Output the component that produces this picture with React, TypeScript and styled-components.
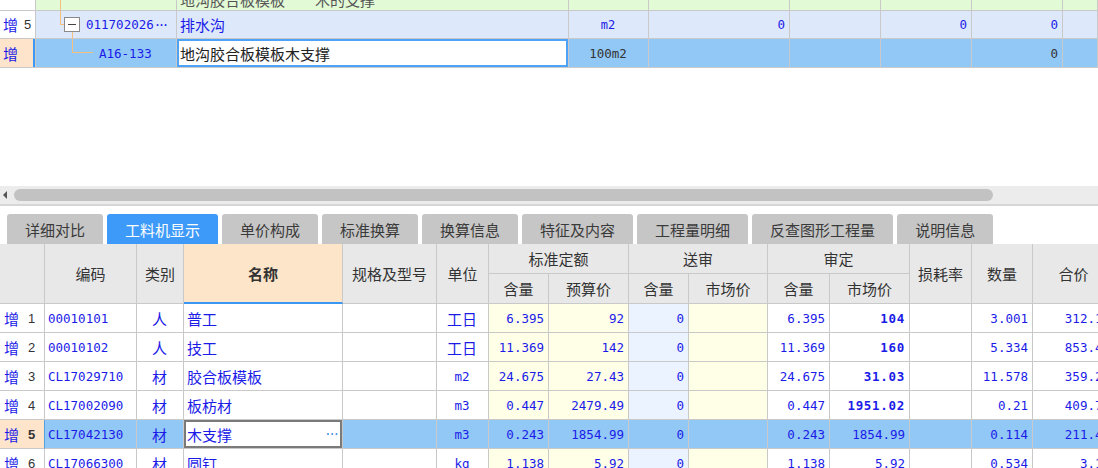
import styled, { createGlobalStyle } from 'styled-components';

const GlobalStyle = createGlobalStyle`
  html, body {
    margin: 0;
    padding: 0;
    background: #fff;
  }
  body {
    font-family: "Noto Sans CJK SC", "Noto Sans", sans-serif;
    overflow: hidden;
  }
`;

const BLUE = '#1b1be8';
const LINE = '#c9c9c9';
const YELLOW = '#ffffe8';
const PALEBLUE = '#eaf3ff';
const SEL = '#92c8f6';
const PEACH = '#fde4cb';
const MONO = '"DejaVu Sans Mono", "Liberation Mono", "Noto Sans CJK SC", monospace';

const TOP_COLS = '36px 141px 392px 80px 141px 91px 91px 91px 1fr';
const GRID_COLS =
  '45px 92px 47px 159px 94px 52px 60px 80px 60px 79px 62px 80px 62px 61px 82px';

type Align = 'left' | 'center' | 'right';

interface RowData {
  n: number;
  code: string;
  kind: string;
  name: string;
  unit: string;
  unitMono?: boolean;
  q: string;
  price: string;
  market: string;
  boldMarket?: boolean;
  qty: string;
  total: string;
  selected?: boolean;
}

const rows: RowData[] = [
  { n: 1, code: '00010101', kind: '人', name: '普工', unit: '工日', q: '6.395', price: '92', market: '104', boldMarket: true, qty: '3.001', total: '312.10' },
  { n: 2, code: '00010102', kind: '人', name: '技工', unit: '工日', q: '11.369', price: '142', market: '160', boldMarket: true, qty: '5.334', total: '853.44' },
  { n: 3, code: 'CL17029710', kind: '材', name: '胶合板模板', unit: 'm2', unitMono: true, q: '24.675', price: '27.43', market: '31.03', boldMarket: true, qty: '11.578', total: '359.27' },
  { n: 4, code: 'CL17002090', kind: '材', name: '板枋材', unit: 'm3', unitMono: true, q: '0.447', price: '2479.49', market: '1951.02', boldMarket: true, qty: '0.21', total: '409.71' },
  { n: 5, code: 'CL17042130', kind: '材', name: '木支撑', unit: 'm3', unitMono: true, q: '0.243', price: '1854.99', market: '1854.99', qty: '0.114', total: '211.47', selected: true },
  { n: 6, code: 'CL17066300', kind: '材', name: '圆钉', unit: 'kg', unitMono: true, q: '1.138', price: '5.92', market: '5.92', qty: '0.534', total: '3.16' },
];

const tabs = ['详细对比', '工料机显示', '单价构成', '标准换算', '换算信息', '特征及内容', '工程量明细', '反查图形工程量', '说明信息'];

export default function App() {
  return (
    <>
      <GlobalStyle />
      <Page>
        <TopGrid>
          <TopRow $h={11}>
            <Cell />
            <Cell $bg="#e2fad5">
              <TreeLine style={{ left: 24, top: 0, height: 11 }} />
            </Cell>
            <Cell $bg="#e2fad5" $color="#555">
              <ClippedText>地沟胶合板模板　　木的支撑</ClippedText>
            </Cell>
            <Cell $bg="#e2fad5" />
            <Cell $bg="#e2fad5" />
            <Cell $bg="#e2fad5" />
            <Cell $bg="#e2fad5" />
            <Cell $bg="#e2fad5" />
            <Cell $bg="#e2fad5" />
          </TopRow>
          <TopRow $h={28}>
            <Cell>
              <Add>增</Add>
              <Num $gap={6}>5</Num>
            </Cell>
            <Cell $bg="#dde9fb" $mono>
              <TreeLine style={{ left: 24, top: 0, height: 13 }} />
              <TreeLine style={{ left: 24, top: 13, width: 4, height: 1 }} />
              <TreeLine style={{ left: 36, top: 21, height: 7 }} />
              <Toggle>
                <Minus />
              </Toggle>
              <Indent $w={47} />
              011702026<Dots>···</Dots>
            </Cell>
            <Cell $bg="#dde9fb">排水沟</Cell>
            <Cell $bg="#dde9fb" $align="center" $mono $small>
              m2
            </Cell>
            <Cell $bg="#dde9fb" $align="right" $mono>
              0
            </Cell>
            <Cell $bg="#dde9fb" />
            <Cell $bg="#dde9fb" $align="right" $mono>
              0
            </Cell>
            <Cell $bg="#dde9fb" $align="right" $mono>
              0
            </Cell>
            <Cell $bg="#dde9fb" />
          </TopRow>
          <TopRow $h={29}>
            <FocusHead>
              <Add>增</Add>
            </FocusHead>
            <Cell $bg={SEL} $mono>
              <TreeLine style={{ left: 36, top: 0, height: 13 }} />
              <TreeLine style={{ left: 36, top: 13, width: 21, height: 1 }} />
              <Indent $w={60} />
              A16-133
            </Cell>
            <FocusCell>地沟胶合板模板木支撑</FocusCell>
            <Cell $bg={SEL} $align="center" $mono $color="#333">
              100m2
            </Cell>
            <Cell $bg={SEL} />
            <Cell $bg={SEL} />
            <Cell $bg={SEL} />
            <Cell $bg={SEL} $align="right" $mono $color="#333">
              0
            </Cell>
            <Cell $bg={SEL} />
          </TopRow>
        </TopGrid>

        <EmptyArea />

        <ScrollTrack>
          <ArrowLeft />
          <Thumb />
        </ScrollTrack>

        <TabBar>
          {tabs.map((t, i) => (
            <Tab key={t} $active={i === 1}>
              {t}
            </Tab>
          ))}
        </TabBar>

        <BottomGrid>
          <Header>
            <HeadCell $r="1 / 3" $c="1" />
            <HeadCell $r="1 / 3" $c="2">编码</HeadCell>
            <HeadCell $r="1 / 3" $c="3">类别</HeadCell>
            <HeadCell $r="1 / 3" $c="4" $active>
              名称
            </HeadCell>
            <HeadCell $r="1 / 3" $c="5">规格及型号</HeadCell>
            <HeadCell $r="1 / 3" $c="6">单位</HeadCell>
            <HeadCell $r="1" $c="7 / 9">标准定额</HeadCell>
            <HeadCell $r="1" $c="9 / 11">送审</HeadCell>
            <HeadCell $r="1" $c="11 / 13">审定</HeadCell>
            <HeadCell $r="1 / 3" $c="13">损耗率</HeadCell>
            <HeadCell $r="1 / 3" $c="14">数量</HeadCell>
            <HeadCell $r="1 / 3" $c="15">合价</HeadCell>
            <HeadCell $r="2" $c="7">含量</HeadCell>
            <HeadCell $r="2" $c="8">预算价</HeadCell>
            <HeadCell $r="2" $c="9">含量</HeadCell>
            <HeadCell $r="2" $c="10">市场价</HeadCell>
            <HeadCell $r="2" $c="11">含量</HeadCell>
            <HeadCell $r="2" $c="12">市场价</HeadCell>
          </Header>

          {rows.map((r) => {
            const sel = !!r.selected;
            const bg = (c: string) => (sel ? SEL : c);
            return (
              <DataRow key={r.n}>
                <RowHead $selected={sel}>
                  <Add>增</Add>
                  <Num $gap={9} $bold={sel}>
                    {r.n}
                  </Num>
                </RowHead>
                <Cell $bg={bg('#fff')} $mono>
                  {r.code}
                </Cell>
                <Cell $bg={bg('#fff')} $align="center">
                  {r.kind}
                </Cell>
                {sel ? (
                  <EditCell>
                    {r.name}
                    <EditDots>···</EditDots>
                  </EditCell>
                ) : (
                  <Cell>{r.name}</Cell>
                )}
                <Cell $bg={bg('#fff')} />
                <Cell $bg={bg('#fff')} $align="center" $mono={r.unitMono}>
                  {r.unit}
                </Cell>
                <Cell $bg={bg(YELLOW)} $align="right" $mono>
                  {r.q}
                </Cell>
                <Cell $bg={bg(YELLOW)} $align="right" $mono>
                  {r.price}
                </Cell>
                <Cell $bg={bg(PALEBLUE)} $align="right" $mono>
                  0
                </Cell>
                <Cell $bg={bg(YELLOW)} />
                <Cell $bg={bg('#fff')} $align="right" $mono>
                  {r.q}
                </Cell>
                <Cell $bg={bg('#fff')} $align="right" $mono $bold={r.boldMarket}>
                  {r.market}
                </Cell>
                <Cell $bg={bg('#fff')} />
                <Cell $bg={bg('#fff')} $align="right" $mono>
                  {r.qty}
                </Cell>
                <Cell $bg={bg('#fff')} $align="right" $mono>
                  {r.total}
                </Cell>
              </DataRow>
            );
          })}
        </BottomGrid>
      </Page>
    </>
  );
}

const Page = styled.div`
  width: 1098px;
  height: 468px;
  overflow: hidden;
  display: flex;
  flex-direction: column;
`;

const TopGrid = styled.div`
  display: flex;
  flex-direction: column;
  flex-shrink: 0;
`;

interface TopRowProps {
  $h: number;
}

const TopRow = styled.div<TopRowProps>`
  display: grid;
  grid-template-columns: ${TOP_COLS};
  height: ${(p) => p.$h}px;
`;

interface CellProps {
  $bg?: string;
  $align?: Align;
  $mono?: boolean;
  $bold?: boolean;
  $small?: boolean;
  $color?: string;
}

const justify = (a?: Align) =>
  a === 'right' ? 'flex-end' : a === 'center' ? 'center' : 'flex-start';

const Cell = styled.div<CellProps>`
  position: relative;
  box-sizing: border-box;
  display: flex;
  align-items: center;
  justify-content: ${(p) => justify(p.$align)};
  padding: 0 4px 0 3px;
  border-right: 1px solid ${LINE};
  border-bottom: 1px solid ${LINE};
  background: ${(p) => p.$bg ?? '#fff'};
  color: ${(p) => p.$color ?? BLUE};
  font-family: ${(p) => (p.$mono ? MONO : 'inherit')};
  font-size: ${(p) => (p.$mono ? (p.$small ? '12px' : '12.5px') : '15px')};
  font-weight: ${(p) => (p.$bold ? 700 : 400)};
  letter-spacing: ${(p) => (p.$bold && p.$mono ? '0.7px' : '0')};
  white-space: nowrap;
  overflow: hidden;
`;

const ClippedText = styled.span`
  align-self: flex-start;
  margin-top: -10px;
  line-height: 20px;
`;

const FocusHead = styled(Cell)`
  background: ${PEACH};
  box-shadow: inset -2px 0 0 #3b98f5;
`;

const FocusCell = styled(Cell)`
  background: #fff;
  color: #222;
  padding-left: 3px;
  box-shadow: inset 0 0 0 2px #4ca3f7;
`;

const TreeLine = styled.span`
  position: absolute;
  width: 1px;
  background: #f6bf7c;
`;

const Toggle = styled.span`
  position: absolute;
  left: 28px;
  top: 6px;
  width: 16px;
  height: 15px;
  box-sizing: border-box;
  border: 1px solid #8a8a8a;
  background: #fff;
  display: flex;
  align-items: center;
  justify-content: center;
`;

const Minus = styled.span`
  width: 8px;
  height: 1px;
  background: #444;
`;

interface IndentProps {
  $w: number;
}

const Indent = styled.span<IndentProps>`
  flex: 0 0 ${(p) => p.$w}px;
`;

const Dots = styled.span`
  letter-spacing: -3.5px;
`;

const Add = styled.span`
  color: ${BLUE};
  font-size: 15px;
  font-family: "Noto Sans CJK SC", sans-serif;
`;

interface NumProps {
  $gap: number;
  $bold?: boolean;
}

const Num = styled.span<NumProps>`
  margin-left: ${(p) => p.$gap}px;
  color: #333;
  font-family: "Liberation Sans", sans-serif;
  font-size: 13px;
  font-weight: ${(p) => (p.$bold ? 700 : 400)};
`;

const EmptyArea = styled.div`
  flex: 0 0 118px;
`;

const ScrollTrack = styled.div`
  flex: 0 0 20px;
  box-sizing: border-box;
  display: flex;
  align-items: center;
  padding-left: 3px;
  background: #ececec;
  border-bottom: 2px solid #d6d6d6;
`;

const ArrowLeft = styled.span`
  width: 0;
  height: 0;
  border-top: 4px solid transparent;
  border-bottom: 4px solid transparent;
  border-right: 4px solid #555;
`;

const Thumb = styled.span`
  margin-left: 7px;
  width: 979px;
  height: 12px;
  border-radius: 6px;
  background: #c2c2c2;
`;

const TabBar = styled.div`
  flex: 0 0 38px;
  box-sizing: border-box;
  display: flex;
  align-items: flex-end;
  gap: 4px;
  padding-left: 7px;
`;

interface TabProps {
  $active?: boolean;
}

const Tab = styled.div<TabProps>`
  height: 30px;
  display: flex;
  align-items: center;
  padding: 0 18px;
  border-radius: 3px 3px 0 0;
  font-size: 15px;
  background: ${(p) => (p.$active ? '#3d9af8' : '#c6c6c6')};
  color: ${(p) => (p.$active ? '#fff' : '#3a3a3a')};
`;

const BottomGrid = styled.div`
  display: flex;
  flex-direction: column;
  flex-shrink: 0;
`;

const Header = styled.div`
  display: grid;
  grid-template-columns: ${GRID_COLS};
  grid-template-rows: 30px 30px;
  background: #e8e8e8;
`;

interface HeadCellProps {
  $r: string;
  $c: string;
  $active?: boolean;
}

const HeadCell = styled.div<HeadCellProps>`
  grid-row: ${(p) => p.$r};
  grid-column: ${(p) => p.$c};
  box-sizing: border-box;
  display: flex;
  align-items: center;
  justify-content: center;
  border-right: 1px solid ${LINE};
  border-bottom: ${(p) => (p.$active ? '2px solid #3a98f5' : `1px solid ${LINE}`)};
  background: ${(p) => (p.$active ? '#fde5c9' : '#e8e8e8')};
  font-size: 15px;
  font-weight: ${(p) => (p.$active ? 700 : 400)};
  color: #333;
  white-space: nowrap;
`;

const DataRow = styled.div`
  display: grid;
  grid-template-columns: ${GRID_COLS};
  height: 29px;
  flex-shrink: 0;
`;

interface RowHeadProps {
  $selected?: boolean;
}

const RowHead = styled(Cell)<RowHeadProps>`
  padding-left: 4px;
  background: ${(p) => (p.$selected ? PEACH : '#fff')};
  border-right-color: ${(p) => (p.$selected ? '#5a9fe0' : LINE)};
`;

const EditCell = styled(Cell)`
  background: #fff;
  box-shadow: inset 0 0 0 2px #7a7a7a;
  justify-content: space-between;
  padding: 0 5px 0 3px;
`;

const EditDots = styled.span`
  color: #3a8ee6;
  font-family: ${MONO};
  font-size: 12px;
  letter-spacing: -3px;
`;
